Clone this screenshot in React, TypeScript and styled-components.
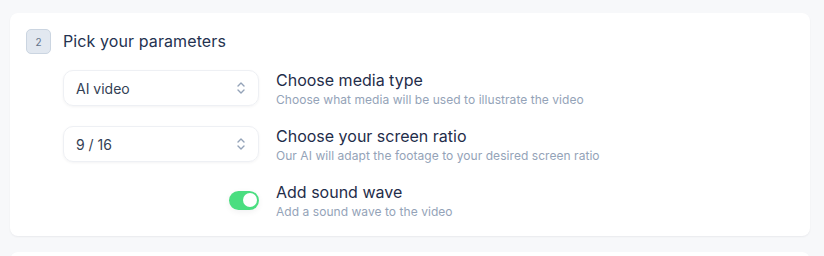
import styled, { createGlobalStyle } from 'styled-components'

const GlobalStyle = createGlobalStyle`
  html, body {
    margin: 0;
    padding: 0;
    background: #f7f8fa;
    font-family: Inter, "Noto Sans", sans-serif;
  }
`

const Page = styled.div`
  padding: 13px 14px 0 10px;
  display: flex;
  flex-direction: column;
  gap: 16px;
`

const Card = styled.section<{ $empty?: boolean }>`
  background: #ffffff;
  border-radius: 8px;
  box-shadow: 0 1px 2px rgba(15, 23, 42, 0.06);
  padding: 16px;
  min-height: ${(p) => (p.$empty ? '40px' : 'auto')};
`

const Header = styled.div`
  display: flex;
  align-items: center;
  gap: 12px;
`

const StepBadge = styled.div`
  width: 23px;
  height: 23px;
  border-radius: 5px;
  background: #e2e8f0;
  border: 1px solid #cbd5e1;
  color: #64748b;
  font-size: 10px;
  display: flex;
  align-items: center;
  justify-content: center;
`

const Title = styled.h2`
  margin: -2px 0 0 0;
  font-size: 16px;
  letter-spacing: 0.1px;
  font-weight: 400;
  color: #243250;
`

const Rows = styled.div`
  margin: 14px 0 0 37px;
  display: flex;
  flex-direction: column;
  gap: 16px;
`

const Row = styled.div`
  display: flex;
  align-items: center;
  gap: 17px;
`

const Control = styled.div`
  width: 196px;
  height: 36px;
  display: flex;
  align-items: center;
  justify-content: flex-end;
`

const Select = styled.div`
  box-sizing: border-box;
  width: 100%;
  height: 36px;
  border: 1px solid #eef0f4;
  border-radius: 10px;
  box-shadow: 0 1px 3px rgba(15, 23, 42, 0.05);
  display: flex;
  align-items: center;
  justify-content: space-between;
  padding: 0 12px 0 12px;
  font-size: 14px;
  color: #334155;
`

const Toggle = styled.div<{ $on: boolean }>`
  width: 30px;
  height: 19px;
  border-radius: 10px;
  background: ${(p) => (p.$on ? '#4ade80' : '#e2e8f0')};
  position: relative;
  box-shadow: 0 2px 6px rgba(15, 23, 42, 0.06);

  &::after {
    content: '';
    position: absolute;
    top: 2.5px;
    left: ${(p) => (p.$on ? '13.5px' : '2.5px')};
    width: 14px;
    height: 14px;
    border-radius: 50%;
    background: #ffffff;
  }
`

const Text = styled.div`
  display: flex;
  flex-direction: column;
`

const Label = styled.div`
  font-size: 16px;
  font-weight: 400;
  line-height: 24px;
  color: #1f2d4a;
`

const Hint = styled.div`
  font-size: 12px;
  line-height: 16px;
  letter-spacing: 0.05px;
  color: #94a3b8;
`

function Chevrons() {
  return (
    <svg width="10" height="16" viewBox="0 0 10 16" fill="none" stroke="#94a3b8" strokeWidth="1.4" strokeLinecap="round" strokeLinejoin="round">
      <polyline points="2,6 5,3 8,6" />
      <polyline points="2,10 5,13 8,10" />
    </svg>
  )
}

const rows = [
  { kind: 'select', value: 'AI video', label: 'Choose media type', hint: 'Choose what media will be used to illustrate the video' },
  { kind: 'select', value: '9 / 16', label: 'Choose your screen ratio', hint: 'Our AI will adapt the footage to your desired screen ratio' },
  { kind: 'toggle', value: '', label: 'Add sound wave', hint: 'Add a sound wave to the video' },
]

export default function App() {
  return (
    <>
      <GlobalStyle />
      <Page>
        <Card>
          <Header>
            <StepBadge>2</StepBadge>
            <Title>Pick your parameters</Title>
          </Header>
          <Rows>
            {rows.map((r) => (
              <Row key={r.label}>
                <Control>
                  {r.kind === 'select' ? (
                    <Select>
                      <span>{r.value}</span>
                      <Chevrons />
                    </Select>
                  ) : (
                    <Toggle $on />
                  )}
                </Control>
                <Text>
                  <Label>{r.label}</Label>
                  <Hint>{r.hint}</Hint>
                </Text>
              </Row>
            ))}
          </Rows>
        </Card>
        <Card $empty />
      </Page>
    </>
  )
}
